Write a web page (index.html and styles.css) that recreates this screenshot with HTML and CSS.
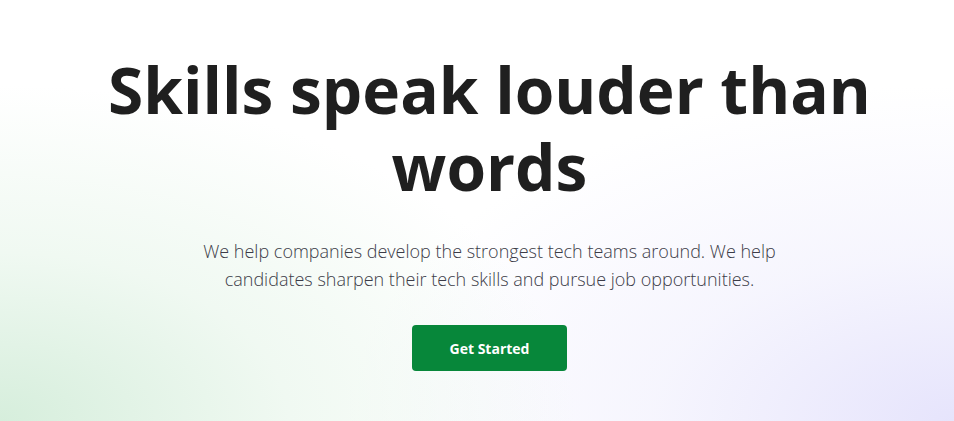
FILE: index.html
```html
<!DOCTYPE html>
<html lang="en">
<head>
<meta charset="utf-8">
<title>Skills speak louder than words</title>
<link rel="stylesheet" href="styles.css">
</head>
<body>
<section class="hero">
  <h1 class="hero-title">Skills speak louder than words</h1>
  <p class="hero-text">We help companies develop the strongest tech teams around. We help candidates sharpen their tech skills and pursue job opportunities.</p>
  <a class="hero-btn" href="#">Get Started</a>
</section>
</body>
</html>
```

FILE: styles.css
```css
html, body {
  margin: 0;
  padding: 0;
}
body {
  font-family: "Open Sans", "Noto Sans", sans-serif;
  color: #1f1f1f;
  background: #fff;
}
.hero {
  box-sizing: border-box;
  height: 421px;
  display: flex;
  flex-direction: column;
  align-items: center;
  padding: 51px 0 0 25px;
  background:
    radial-gradient(ellipse 720px 420px at 0% 100%, rgba(214, 238, 220, 1) 0%, rgba(230, 245, 233, 0.6) 40%, rgba(255, 255, 255, 0) 80%),
    radial-gradient(ellipse 760px 420px at 100% 100%, rgba(230, 228, 252, 1) 0%, rgba(240, 239, 253, 0.6) 40%, rgba(255, 255, 255, 0) 80%),
    #ffffff;
}
.hero-title {
  margin: 0;
  max-width: 800px;
  text-align: center;
  font-size: 64px;
  line-height: 77px;
  font-weight: 700;
  color: #1f1f1f;
}
.hero-text {
  margin: 32px 0 0;
  max-width: 590px;
  text-align: center;
  font-size: 18px;
  line-height: 28px;
  font-weight: 300;
  color: #3c3c48;
}
.hero-btn {
  margin-top: 32px;
  width: 155px;
  height: 46px;
  display: flex;
  align-items: center;
  justify-content: center;
  background: #07873a;
  color: #fff;
  border-radius: 4px;
  font-size: 14px;
  font-weight: 700;
  text-decoration: none;
}
```
